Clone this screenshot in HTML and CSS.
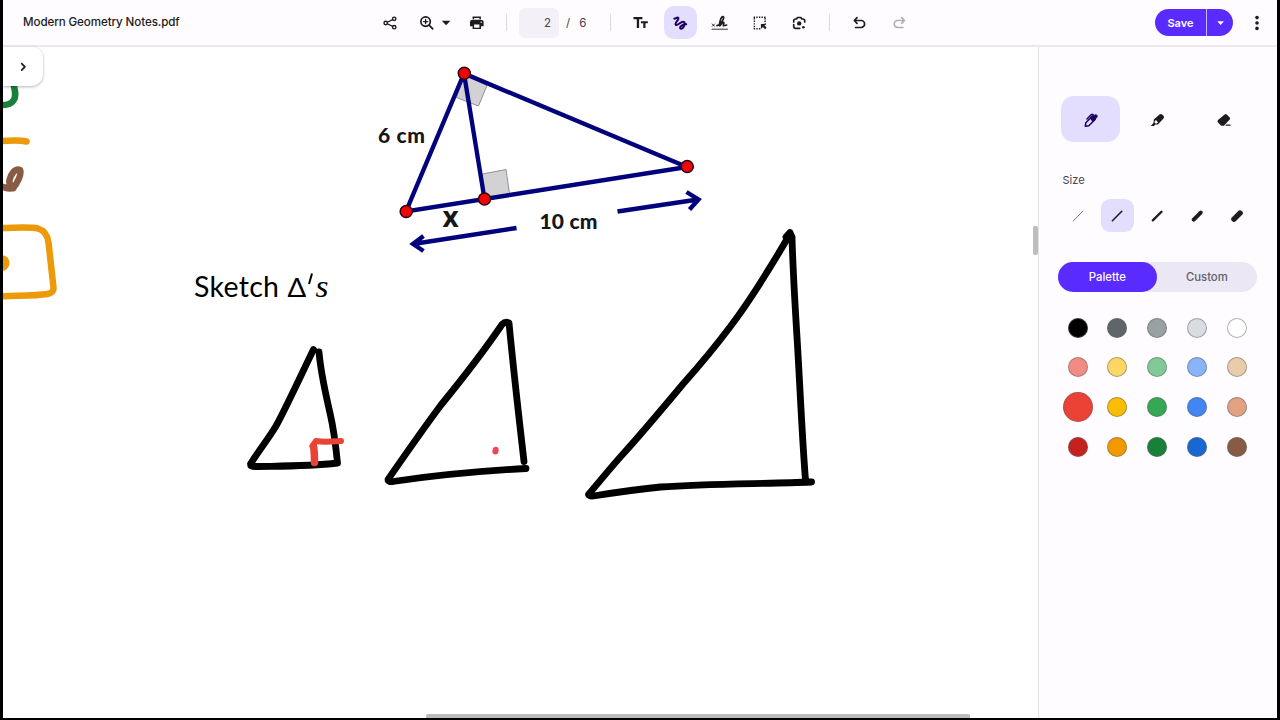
FILE: index.html
```html
<!DOCTYPE html>
<html lang="en">
<head>
  <meta charset="UTF-8" />
  <meta name="viewport" content="width=device-width, initial-scale=1.0" />
  <title>Modern Geometry Notes.pdf</title>
  <link rel="stylesheet" href="styles.css">
</head>
<body>
  <div class="app">
    <header class="toolbar">
      <div class="filename">Modern Geometry Notes.pdf</div>

      <div class="tools">
        <button class="tool share" aria-label="Share">
          <svg class="icon" viewBox="0 0 20 20"><path class="line thin" d="M5.7 10 14.2 5.8M5.7 10l8.5 4.2"/><g class="hollow"><circle cx="5.7" cy="10" r="1.700"/><circle cx="14.2" cy="5.8" r="1.700"/><circle cx="14.2" cy="14.2" r="1.700"/></g></svg>
        </button>
        <button class="tool zoom" aria-label="Zoom">
          <svg class="icon" viewBox="0 0 20 20"><circle class="line" cx="8.600" cy="8.600" r="4.700"/><path class="line" d="m12.100 12.200 3.600 3.600"/><path class="line thin" d="M8.600 6.500v4.200M6.500 8.600h4.200"/></svg>
        </button>
        <button class="tool caret" aria-label="Zoom options">
          <svg class="icon" viewBox="0 0 20 20"><path d="M5.800 7.800h8.600l-4.300 4.400z"/></svg>
        </button>
        <button class="tool print" aria-label="Print">
          <svg class="icon" viewBox="0 0 20 20"><path d="M5.600 3.600h8.300v2.800H5.600zM4.800 7h10a1.800 1.800 0 0 1 1.800 1.800v4.400H14v2.900H5.600v-2.900H3V8.800A1.800 1.800 0 0 1 4.800 7z"/><path class="paper" d="M7.100 5h5.300v1.400H7.100zM7.100 11.500h5.300v3.200H7.100z"/><circle class="paper" cx="14.200" cy="9.200" r=".7"/></svg>
        </button>
        <span class="sep"></span>
        <div class="pages"><span class="page-box">2</span><span class="slash">/</span><span>6</span></div>
        <span class="sep"></span>
        <div class="group">
          <button class="tool" aria-label="Text">
            <svg class="icon" viewBox="0 0 20 20"><path d="M2.500 4h8.900v2.200H8.100V15H5.800V6.200H2.500zM9.900 8.200h6.900v2h-2.300V15h-2.200v-4.800H9.900z"/></svg>
          </button>
          <button class="tool active" aria-label="Draw">
            <svg class="icon" viewBox="0 0 20 20"><path class="line bold" d="M4.300 5.600c1.300.4 2.500-1.600 3.700-1 2 1.300-3.700 5.200-2.300 7.100 1.800 1.800 5.600-4.300 8.100-2.800 2.400 1.700-.6 7.400-2.900 6.900-2.300-.7.600-4.700 5.300-4.500"/></svg>
          </button>
          <button class="tool" aria-label="Sign">
            <svg class="icon" viewBox="0 0 20 20"><path class="line tiny" d="m2.300 11 2.200 2.200m0-2.200-2.200 2.200"/><path class="line" d="M7 12.700c4.200-.8 8.400-8.900 5.900-9.100-2.400-.1-3.900 8.400-3.200 9.200.8.400 1.800-4 3.700-3.400 1.500.6-1 2.800.2 3.300.9.300 2-.4 3-.7"/><path class="line tiny" d="M2 16.200h15.500"/></svg>
          </button>
          <button class="tool" aria-label="Select area">
            <svg class="icon" viewBox="0 0 20 20"><path class="line dotted" d="M3.700 4.300h12.100M4.400 5v11.500M15.100 5v6.500M3.700 15.800h7.500"/><path d="M10.900 10.900h5.300l-1.700 1.700 2.100 2.100-1.500 1.500-2.200-2.100-2 2z"/></svg>
          </button>
          <button class="tool" aria-label="Lens">
            <svg class="icon" viewBox="0 0 20 20"><path class="line" d="M4.700 9V7.800q0-1.800 1.800-1.800h1l1-1.500h3.300l1 1.500h1q1.900 0 1.900 1.800V9M4.700 11.500v1.700q0 2.100 2.100 2.100h3.900"/><circle cx="10.200" cy="10.400" r="2.200"/><circle cx="14.400" cy="14.200" r="1.300"/></svg>
          </button>
        </div>
        <span class="sep"></span>
        <div class="group">
          <button class="tool" aria-label="Undo">
            <svg class="icon" viewBox="0 0 20 20"><path class="line" d="M8 4.700 5.300 7.500 8 10.300M5.600 7.500h6.500a3.500 3.500 0 0 1 0 7H6.600"/></svg>
          </button>
          <button class="tool disabled" aria-label="Redo">
            <svg class="icon" viewBox="0 0 20 20"><path class="line" d="m12.700 4.700 2.700 2.800-2.700 2.800M15.100 7.500H8.700a3.500 3.500 0 0 0 0 7h5.200"/></svg>
          </button>
        </div>
      </div>

      <div class="actions">
        <div class="save">
          <button class="save-main">Save</button>
          <button class="save-more" aria-label="Save options"><svg class="icon" viewBox="0 0 20 20"><path d="M7.300 8.300h6.600l-3.300 3.600z"/></svg></button>
        </div>
        <button class="menu" aria-label="More"><svg class="icon" viewBox="0 0 20 20"><circle cx="10" cy="4.600" r="1.800"/><circle cx="10" cy="10" r="1.800"/><circle cx="10" cy="15.400" r="1.800"/></svg></button>
      </div>
    </header>

    <div class="main">
      <div class="viewer">
        <svg class="page" viewBox="3 47 1035 671" width="1035" height="671">
          <!-- notes from the previous column -->
          <g class="ink side">
            <path class="green" d="M13 82c1.500 7 4 14 .5 18.500-3 4-6.500 5-13.500 4.500"/>
            <path class="orange" d="M0 141c9 0 18-1.300 26.500.5"/>
            <path class="brown" d="M0 186c5 1 8 4 13 2 4-4 9-14 7-18-5-2-9 4-10.500 10-.5 3 0 6 4 8"/>
            <path class="orange" d="M0 228c14 0 29-1.500 38 .5 7 2 9.500 7 10.500 14l5 45c.5 4-2 5.500-6 6.500-13 2-30 1.500-50 2.500"/>
            <circle class="orange-dot" cx="1.500" cy="263" r="8"/>
          </g>

          <!-- given figure -->
          <g class="marks">
            <path d="m464 74-7.500 23.500 22 8.500 8.500-20.500z"/>
            <path d="m480 174.500 26-5 3.500 24-25 5z"/>
          </g>
          <g class="figure">
            <path d="M464 73.500 406 211.500 687 167zM464 73.500 484.500 199"/>
            <path d="M516.500 228 413 244M423.500 236 413 244l10.500 7M617.500 211.500 698 199.500M686.500 192l12 7.500-9 10"/>
          </g>
          <g class="points">
            <circle cx="464.300" cy="73.300" r="6"/>
            <circle cx="406.200" cy="211.500" r="6"/>
            <circle cx="484.500" cy="199" r="6"/>
            <circle cx="687.200" cy="166.500" r="6"/>
          </g>
          <text class="label" x="378" y="142.500" textLength="47">6 cm</text>
          <text class="label" x="539.500" y="229" textLength="58">10 cm</text>
          <text class="label x-label" x="442.500" y="226.500">x</text>

          <text class="heading" x="194" y="297" textLength="85">Sketch</text>
          <text class="math" x="287.500" y="297">Δ</text>
          <path class="prime" d="m312 273.500-3 10.500"/>
          <text class="math var" x="315.500" y="297" textLength="13" lengthAdjust="spacingAndGlyphs">s</text>

          <!-- sketched triangles -->
          <g class="ink">
            <path d="M313.500 349.500C302 373 286 408 276 426c-9 15-17 24-25.500 38q0 2.500 4 2.500C281 466 308 466.500 337.500 463c-2-20-4-35-7.500-50-4-18-9-38-11-61"/>
            <path d="M524 461.500C520 426 515 385 509 323q-3.500-2-7 1.500C484 351 463 378 441 405c-18 24-36 50-53 74.500q0 2.500 5 2C437 475 481 471 526 468.500"/>
            <path d="M790 234C769 270 749 302 730 327c-15 20-31 39-47 57-20 24-40 48-60 70-11 12-23 27-34.500 40.500q1 2 5 1.500 37-6 67-9c47-3.500 101-3 151-5M792 237c1 35 3 68 5 100 3 49 5 99 8.500 143M786 237l4-4.500 2 5"/>
          </g>
          <g class="ink red">
            <path class="wide" d="M314.500 462.500c0-6 0-11-1-16"/>
            <path d="m312.500 446 3.500-5c9 1.500 17 .5 25 0"/>
            <path class="dot" d="m495.700 449.800-.3 1.700"/>
          </g>
        </svg>
        <button class="expand" aria-label="Open thumbnails"><svg class="icon" viewBox="0 0 20 20"><path class="line" d="m8.700 6.700 3.200 3.200-3.200 3.200"/></svg></button>
        <span class="scroll-y"></span>
        <span class="scroll-x"></span>
      </div>

      <aside class="panel">
        <div class="brushes">
          <button class="brush active" aria-label="Pen">
            <svg class="icon" viewBox="0 0 20 20"><path d="m8.700 7.700 2.600-2.600 1 .9 1.200-1.200a1.700 1.700 0 0 1 2.400 0l.3.300a1.700 1.700 0 0 1 0 2.400L11.500 12z"/><path class="line slim" d="m4.300 16.200.5-3.400 6.500-6.500 3 3-6.500 6.400z"/><path class="line slim" d="m6 9 4.300-4.400q.8-.8 1.600 0l.5.600"/></svg>
          </button>
          <button class="brush" aria-label="Highlighter">
            <svg class="icon" viewBox="0 0 20 20"><path d="m6.800 9.500 5.700-5q1.300-1.200 2.600 0l1.400 1.300q1.300 1.300 0 2.700l-5.600 6H8.300L7 16.100H3.700l2.800-3z"/><path class="hole" d="M7.700 11.200 8.900 10l2.100 2.200-1.300 1.200H8.400l-.7-.6z"/></svg>
          </button>
          <button class="brush" aria-label="Eraser">
            <svg class="icon" viewBox="0 0 20 20"><path d="m4 10.100 6.700-5.600q1-.8 2 .1l3 3q.9.900 0 1.900L10 15.800H7.200L4 12.400q-1.100-1.200 0-2.300zM12.500 14.500h4v1.300h-5.200z"/></svg>
          </button>
        </div>

        <div class="title">Size</div>
        <div class="sizes">
          <button class="size s1" aria-label="Size 1"><svg class="icon" viewBox="0 0 20 20"><path d="m5.200 14.900 9.800-9.800"/></svg></button>
          <button class="size s2 active" aria-label="Size 2"><svg class="icon" viewBox="0 0 20 20"><path d="m5.400 14.700 9.400-9.400"/></svg></button>
          <button class="size s3" aria-label="Size 3"><svg class="icon" viewBox="0 0 20 20"><path d="m5.800 14.400 8.700-8.700"/></svg></button>
          <button class="size s4" aria-label="Size 4"><svg class="icon" viewBox="0 0 20 20"><path d="m6.700 13.600 7-7"/></svg></button>
          <button class="size s5" aria-label="Size 5"><svg class="icon" viewBox="0 0 20 20"><path d="m7 13.100 6-6"/></svg></button>
        </div>

        <div class="tabs">
          <button class="tab active">Palette</button>
          <button class="tab">Custom</button>
        </div>

        <div class="palette">
          <span class="color black"></span>
          <span class="color gray-dark"></span>
          <span class="color gray"></span>
          <span class="color gray-light"></span>
          <span class="color white"></span>
          <span class="color red-light"></span>
          <span class="color yellow-light"></span>
          <span class="color green-light"></span>
          <span class="color blue-light"></span>
          <span class="color sand"></span>
          <span class="color red-mid selected"></span>
          <span class="color yellow"></span>
          <span class="color green-mid"></span>
          <span class="color blue"></span>
          <span class="color tan"></span>
          <span class="color red-dark"></span>
          <span class="color amber"></span>
          <span class="color green-dark"></span>
          <span class="color blue-dark"></span>
          <span class="color umber"></span>
        </div>
      </aside>
    </div>
  </div>
</body>
</html>
```
FILE: styles.css
```css
* {
  box-sizing: border-box;
}
body {
  margin: 0;
  height: 720px;
  padding: 0 3px 2px;
  background: #000;
  font-family: Inter, "Liberation Sans", sans-serif;
  color: #1d1b20;
  overflow: hidden;
}
button {
  border: 0;
  padding: 0;
  background: none;
  font: inherit;
  color: inherit;
}
.app {
  display: flex;
  flex-direction: column;
  height: 718px;
  background: #fefcff;
}

/* toolbar */
.toolbar {
  display: flex;
  height: 47px;
  align-items: center;
  border-bottom: 2px solid #ebeaed;
}
.filename {
  width: 370px;
  padding-left: 20px;
  padding-bottom: 1px;
  font-size: 11.6px;
  font-weight: 500;
  letter-spacing: -0.1px;
}
.tools,
.group {
  display: flex;
  align-items: center;
}
.group {
  gap: 6.7px;
}
.icon {
  display: block;
  flex: none;
  width: 20px;
  height: 20px;
  fill: currentColor;
}
.line {
  fill: none;
  stroke: currentColor;
  stroke-width: 1.7;
  stroke-linecap: round;
  stroke-linejoin: round;
}
.bold {
  stroke-width: 2;
}
.slim {
  stroke-width: 1.5;
}
.thin {
  stroke-width: 1.3;
}
.tiny {
  stroke-width: 0.9;
}
.dotted {
  stroke-width: 1.4;
  stroke-linecap: butt;
  stroke-dasharray: 1.4 1.2;
}
.hollow {
  fill: #fefcff;
  stroke: currentColor;
  stroke-width: 1.4;
}
.paper,
.hole {
  fill: #fefcff;
}
.tool {
  display: flex;
  width: 33px;
  height: 33px;
  align-items: center;
  justify-content: center;
  border-radius: 10px;
}
.tool.active {
  background: #e3defd;
  color: #1c0062;
}
.tool.disabled {
  color: #b1afb4;
}
.share {
  margin-right: 4px;
}
.caret {
  width: 14px;
  margin-left: -4px;
}
.print {
  margin-left: 7px;
}
.sep {
  width: 1px;
  height: 17px;
  margin: 0 13px;
  background: #dcdadf;
}
.pages {
  display: flex;
  width: 77px;
  align-items: center;
  font-size: 11.5px;
  color: #45434a;
}
.page-box {
  width: 40px;
  height: 30px;
  margin-left: -1px;
  padding-right: 8px;
  border-radius: 6px;
  background: #f3f1f7;
  line-height: 30px;
  text-align: right;
}
.slash {
  margin: 0 9px 0 7px;
}
.actions {
  display: flex;
  margin-left: auto;
  align-items: center;
}
.save {
  display: flex;
  height: 27px;
  margin-right: 14px;
  border-radius: 14px;
  overflow: hidden;
  background: #5a2bff;
  color: #fff;
}
.save-main {
  width: 52px;
  border-right: 1px solid #c7b9ff;
  font-size: 11px;
  font-weight: 600;
}
.save-more {
  display: flex;
  width: 26px;
  align-items: center;
  justify-content: center;
}
.menu {
  margin-right: 10px;
}

/* document */
.main {
  display: flex;
  flex: 1;
  min-height: 0;
}
.viewer {
  position: relative;
  width: 1035px;
  background: #fff;
}
.page {
  display: block;
}
.expand {
  position: absolute;
  top: 0;
  left: 0;
  display: flex;
  width: 40px;
  height: 39px;
  align-items: center;
  justify-content: center;
  border-radius: 0 10px 12px 0;
  background: #fff;
  box-shadow: 0 1px 3px rgba(0, 0, 0, 0.3);
}
.scroll-y {
  position: absolute;
  top: 179px;
  right: 0;
  width: 5px;
  height: 29px;
  border-radius: 2px;
  background: #bdbdbd;
}
.scroll-x {
  position: absolute;
  bottom: 0;
  left: 423px;
  width: 544px;
  height: 4px;
  border-radius: 2px 2px 0 0;
  background: #bbb;
}
.ink {
  fill: none;
  stroke: #000;
  stroke-width: 6.8;
  stroke-linecap: round;
  stroke-linejoin: round;
}
.side {
  stroke-width: 6.5;
}
.green {
  stroke: #188038;
}
.orange {
  stroke: #ec9a09;
}
.orange-dot {
  fill: #ec9a09;
  stroke: none;
}
.brown {
  stroke: #885b45;
}
.red {
  stroke: #ea4335;
  stroke-width: 6;
}
.wide {
  stroke-width: 7.5;
}
.dot {
  stroke: #f04452;
}
.figure {
  fill: none;
  stroke: #02027c;
  stroke-width: 4.4;
}
.marks {
  fill: #d2d2d4;
  stroke: #929296;
  stroke-width: 1;
}
.points {
  fill: #f00505;
  stroke: #300014;
  stroke-width: 1.5;
}
.label {
  font: 900 21px Lato, sans-serif;
  fill: #161616;
}
.x-label {
  font: bold 28px "Open Sans", sans-serif;
}
.heading {
  font: 28.5px Lato, sans-serif;
}
.math {
  font: 27.5px Lato, "Noto Sans", sans-serif;
}
.math.var {
  font: italic 31px "Liberation Serif", serif;
}
.prime {
  fill: none;
  stroke: #000;
  stroke-width: 2;
}

/* drawing panel */
.panel {
  flex: 1;
  padding: 49px 19px 0;
  border-left: 1px solid #e4e2e6;
}
.brushes {
  display: flex;
  gap: 7.5px;
  margin-left: 3px;
}
.brush {
  display: flex;
  width: 59px;
  height: 46px;
  padding-top: 2px;
  align-items: center;
  justify-content: center;
  border-radius: 13px;
}
.brush.active {
  background: #e3defd;
  color: #1c0062;
}
.title {
  height: 14px;
  margin: 31px 0 12px 4.5px;
  font-size: 11px;
  line-height: 14px;
  color: #45434a;
}
.sizes {
  display: flex;
  gap: 6.8px;
  margin-left: 3px;
}
.size {
  display: flex;
  width: 33px;
  height: 33px;
  align-items: center;
  justify-content: center;
  border-radius: 9px;
  stroke: currentColor;
  stroke-linecap: round;
}
.size.active {
  background: #e3defd;
}
.size.s1 {
  stroke: #77757b;
}
.s2 {
  stroke-width: 1.6;
}
.s3 {
  stroke-width: 2.3;
}
.s4 {
  stroke-width: 4;
}
.s5 {
  stroke-width: 5.5;
}
.tabs {
  display: flex;
  width: 199px;
  height: 30px;
  margin-top: 30px;
  margin-left: -0.4px;
  border-radius: 15px;
  background: #ebe7f4;
}
.tab {
  flex: 1;
  padding-bottom: 1px;
  border-radius: 15px;
  font-size: 11.3px;
  font-weight: 500;
  color: #625f68;
}
.tab.active {
  background: #5a2bff;
  color: #fff;
}
.palette {
  display: grid;
  grid-template-columns: repeat(5, 39.8px);
  grid-auto-rows: 39.7px;
  margin-top: 15.7px;
  margin-left: -0.4px;
  place-items: center;
}
.color {
  width: 20px;
  height: 20px;
  border: 1px solid rgba(95, 99, 104, 0.5);
  border-radius: 50%;
}
.color.selected {
  width: 30px;
  height: 30px;
}
.black {
  background: #000;
}
.gray-dark {
  background: #5f6568;
}
.gray {
  background: #99a1a3;
}
.gray-light {
  background: #d9dde0;
}
.white {
  background: #fff;
}
.red-light {
  background: #f28b82;
}
.yellow-light {
  background: #fdd663;
}
.green-light {
  background: #81c995;
}
.blue-light {
  background: #8ab4f8;
}
.sand {
  background: #eaccab;
}
.red-mid {
  background: #ea4335;
}
.yellow {
  background: #fbbc04;
}
.green-mid {
  background: #34a853;
}
.blue {
  background: #4285f4;
}
.tan {
  background: #e2a282;
}
.red-dark {
  background: #c5221f;
}
.amber {
  background: #f29900;
}
.green-dark {
  background: #188038;
}
.blue-dark {
  background: #1967d2;
}
.umber {
  background: #885b45;
}
```
